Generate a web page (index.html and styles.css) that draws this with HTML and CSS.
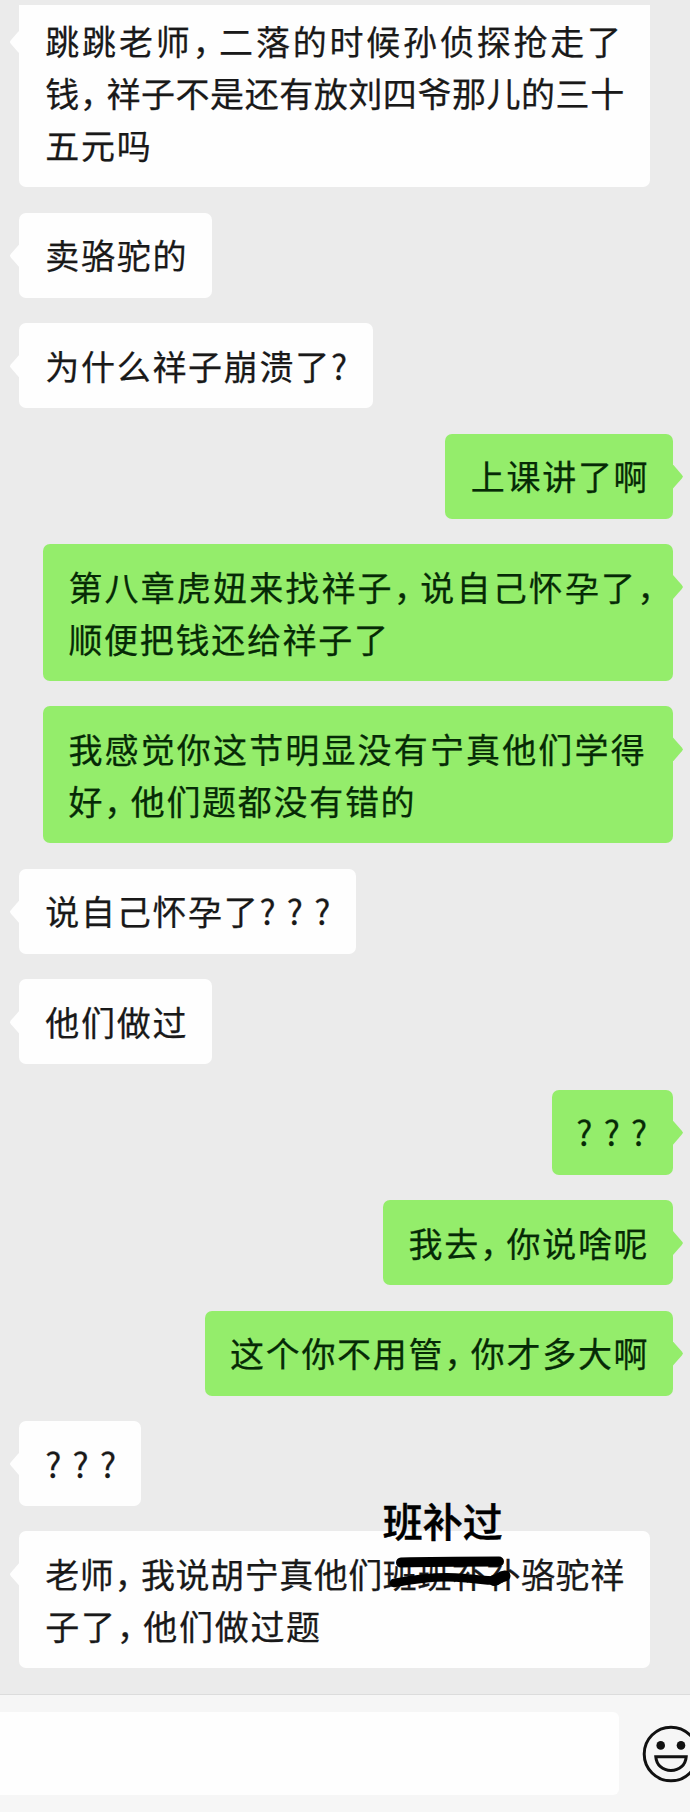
FILE: index.html
```html
<!DOCTYPE html>
<html lang="zh-CN">
<head>
    <meta charset="UTF-8">
    <meta name="viewport" content="width=device-width, initial-scale=1.0">
    <title>聊天</title>
    <link rel="stylesheet" href="styles.css">
</head>
<body>
    <main class="chat">
        <div class="bubble left wide first">
            <div class="line loose">跳跳老师<span class="comma">，</span>二落的时候孙侦探抢走了</div>
            <div class="line tight">钱<span class="comma">，</span>祥子不是还有放刘四爷那儿的三十</div>
            <div class="line">五元吗</div>
        </div>
        <div class="bubble left"><div class="line">卖骆驼的</div></div>
        <div class="bubble left"><div class="line">为什么祥子崩溃了?</div></div>
        <div class="bubble right"><div class="line">上课讲了啊</div></div>
        <div class="bubble right wide">
            <div class="line medium">第八章虎妞来找祥子<span class="comma">，</span>说自己怀孕了<span class="comma">，</span></div>
            <div class="line">顺便把钱还给祥子了</div>
        </div>
        <div class="bubble right wide">
            <div class="line medium">我感觉你这节明显没有宁真他们学得</div>
            <div class="line">好<span class="comma">，</span>他们题都没有错的</div>
        </div>
        <div class="bubble left"><div class="line">说自己怀孕了<span class="marks">???</span></div></div>
        <div class="bubble left"><div class="line">他们做过</div></div>
        <div class="bubble right"><div class="line"><span class="marks">???</span></div></div>
        <div class="bubble right"><div class="line">我去<span class="comma">，</span>你说啥呢</div></div>
        <div class="bubble right"><div class="line">这个你不用管<span class="comma">，</span>你才多大啊</div></div>
        <div class="bubble left"><div class="line"><span class="marks">???</span></div></div>
        <div class="bubble left wide">
            <div class="line tight">老师<span class="comma">，</span>我说胡宁真他们班班补补骆驼祥</div>
            <div class="line">子了<span class="comma">，</span>他们做过题</div>
            <!-- correzione scritta a mano sopra il messaggio -->
            <div class="note">班补过</div>
            <svg class="scribble" viewBox="0 0 130 40" width="130" height="40">
                <path d="M16 11.500C50 10.500 85 10.500 114 10.500" stroke-width="10"/>
                <path d="M9 32C35 27 55 25 78 27S102 30 112 29.500" stroke-width="8.500"/>
                <path d="M109 29.500C114 29 114 25.500 120 25" stroke-width="11"/>
            </svg>
        </div>
    </main>
    <footer class="input-bar">
        <div class="input"></div>
        <svg class="emoji" viewBox="0 0 58 58" width="58" height="58">
            <circle cx="29" cy="29" r="26.800" fill="none" stroke="#111" stroke-width="3"/>
            <circle cx="18.700" cy="20.400" r="4.300" fill="#111"/>
            <circle cx="39" cy="20.400" r="4.300" fill="#111"/>
            <path d="M13.800 31.800H44.200C43.500 40 37.500 45.500 29 45.500S14.500 40 13.800 31.800Z" fill="none" stroke="#111" stroke-width="3"/>
        </svg>
    </footer>
</body>
</html>
```
FILE: styles.css
```css
html, body {
    margin: 0;
    padding: 0;
}

body {
    display: flex;
    flex-direction: column;
    width: 690px;
    height: 1812px;
    overflow: hidden;
    background: #ebebeb;
    font-family: "Noto Sans CJK SC", sans-serif;
}

.chat {
    flex: 1;
    display: flex;
    flex-direction: column;
    align-items: flex-start;
    gap: 25.45px;
    padding: 5px 16.7px 0 19.3px;
}

.bubble {
    position: relative;
    box-sizing: border-box;
    padding: 16.6px 24px 16.4px 26px;
    border-radius: 7px;
    background: #fefefe;
    color: #191919;
}

.bubble.wide {
    width: 630.3px;
    padding-right: 0;
}

/* primo messaggio, tagliato dal bordo superiore */
.bubble.first {
    padding-top: 9.9px;
    border-radius: 0 0 7px 7px;
}

.bubble.right {
    align-self: flex-end;
    padding-left: 25.4px;
    background: #94ed6b;
    color: #062a06;
}

/* punta del fumetto */
.bubble::before {
    content: "";
    position: absolute;
    top: 31px;
    left: -9.5px;
    width: 10px;
    height: 24px;
    background: inherit;
    clip-path: polygon(100% 0, 12% 42%, 0 50%, 12% 58%, 100% 100%);
}

.bubble.right::before {
    left: auto;
    right: -9.5px;
    transform: scaleX(-1);
}

.bubble.first::before {
    top: 25px;
}

.line {
    height: 52px;
    line-height: 52px;
    font-size: 34px;
    letter-spacing: 1.7px;
    white-space: nowrap;
    -webkit-text-stroke: 0.25px currentColor;
}

.line.loose {
    letter-spacing: 2.8px;
}

.line.medium {
    letter-spacing: 2.15px;
}

.line.tight {
    letter-spacing: 0.55px;
}

/* virgola a mezza larghezza */
.comma {
    display: inline-block;
    width: 26.6px;
    font-feature-settings: "halt";
}

.marks {
    display: inline-block;
    width: 72px;
    letter-spacing: 11.2px;
}

.bubble.right .marks {
    text-indent: -1px;
}

.note {
    position: absolute;
    top: -36.5px;
    left: 363.5px;
    color: #000;
    font-size: 40px;
    font-weight: 500;
    line-height: 50px;
    -webkit-text-stroke: 0.4px #000;
}

.scribble {
    position: absolute;
    top: 20px;
    left: 365.7px;
    fill: none;
    stroke: #000;
    stroke-linecap: round;
    stroke-linejoin: round;
}

.input-bar {
    display: flex;
    align-items: center;
    gap: 23.5px;
    box-sizing: border-box;
    height: 118px;
    border-top: 1px solid #dcdcdc;
    background: #f6f6f6;
}

.input {
    flex: none;
    width: 618.5px;
    height: 83px;
    border-radius: 0 6px 6px 0;
    background: #fefefe;
}

.emoji {
    flex: none;
}
```
